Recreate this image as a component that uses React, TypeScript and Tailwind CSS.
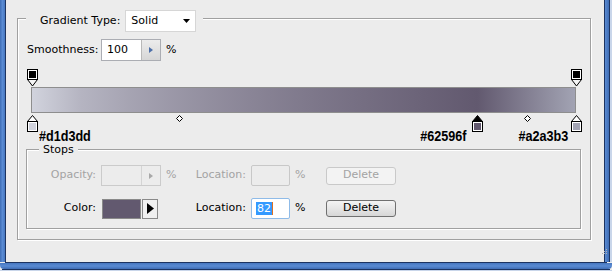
import React from "react";

function TopStop() {
  return (
    <svg width="11" height="18" viewBox="0 0 11 18">
      <path d="M0.5 10.5 L5.5 17 L10.5 10.5 Z" fill="#f4f4f4" stroke="#000" />
      <rect x="0.5" y="0.5" width="10" height="10" fill="#fff" stroke="#000" />
      <rect x="2" y="2" width="7" height="7" fill="#000" />
    </svg>
  );
}

function BottomStop({ color, selected }: { color: string; selected?: boolean }) {
  return (
    <svg width="11" height="17" viewBox="0 0 11 17">
      <path d="M0.5 6.5 L5.5 0.5 L10.5 6.5 Z" fill={selected ? "#000" : "#fff"} stroke="#000" />
      <rect x="0.5" y="6.5" width="10" height="10" fill="#fff" stroke="#000" />
      <rect x="2" y="8" width="7" height="7" fill={color} />
    </svg>
  );
}

function Diamond() {
  return (
    <svg width="7" height="7" viewBox="0 0 7 7">
      <path d="M3.5 0.5 L6.5 3.5 L3.5 6.5 L0.5 3.5 Z" fill="#fff" stroke="#000" />
    </svg>
  );
}

function Stepper({ disabled }: { disabled?: boolean }) {
  return (
    <div
      className={
        disabled
          ? "w-[19px] h-full border-l border-[#d4d4d4] bg-[#ececec] flex items-center justify-center"
          : "w-[19px] h-full border-l border-[#b9b9b9] bg-[linear-gradient(to_bottom,#ececec,#d6d6d6)] flex items-center justify-center"
      }
    >
      <svg width="4" height="6" viewBox="0 0 4 6">
        <path d="M0 0 L4 3 L0 6 Z" fill={disabled ? "#a8a8a8" : "#4d6fa8"} />
      </svg>
    </div>
  );
}

export default function App() {
  return (
    <div className="w-[612px] h-[271px] flex flex-col bg-[#ececec] overflow-hidden font-['DejaVu_Sans',sans-serif] text-[11px] text-black">
      <div className="flex h-[262px]">
        <div className="w-[5px] bg-[linear-gradient(to_right,#3f6db5,#5a8bd3,#4777c0)]" />
        <div className="w-px bg-[#1d3461]" />
        <div className="flex-1 pl-[11px] pt-[18px]">
          {/* outer group box */}
          <div className="relative w-[574px] h-[222px] border border-[#a0a0a0] shadow-[inset_1px_1px_0_#fff,1px_1px_0_#fff]">
            <div className="absolute left-[8px] top-[-9px] flex items-center h-[22px] bg-[#ececec] pl-[14px] pr-[7px]">
              <span className="mr-[5px]">Gradient Type:</span>
              <div className="w-[71px] h-[22px] bg-white border border-[#d6d6d6] flex items-center justify-between pl-[5px] pr-[5px]">
                <span>Solid</span>
                <svg width="7" height="4" viewBox="0 0 7 4">
                  <path d="M0 0 L7 0 L3.5 4 Z" fill="#000" />
                </svg>
              </div>
            </div>

            {/* smoothness */}
            <div className="pt-[20px] pl-[9px] flex items-center h-[42px]">
              <span className="w-[74px]">Smoothness:</span>
              <div className="w-[60px] h-[22px] bg-white border border-[#abadb3] flex items-center">
                <span className="flex-1 pl-[5px]">100</span>
                <Stepper />
              </div>
              <span className="ml-[5px]">%</span>
            </div>

            {/* gradient editor */}
            <div className="relative ml-[13px] mt-[8px] pt-[18px] w-[545px] h-[75px]">
              <div className="h-[26px] border border-[#8e8e8e] bg-[linear-gradient(to_right,#d1d3dd_0%,27%,#62596f_82%,#a2a3b3_100%)]" />
              <div className="absolute left-[-4px] top-0"><TopStop /></div>
              <div className="absolute left-[540px] top-0"><TopStop /></div>
              <div className="absolute left-[-4px] top-[46px]"><BottomStop color="#d1d3dd" /></div>
              <div className="absolute left-[441px] top-[46px]"><BottomStop color="#62596f" selected /></div>
              <div className="absolute left-[540px] top-[46px]"><BottomStop color="#a2a3b3" /></div>
              <div className="absolute left-[145px] top-[46px]"><Diamond /></div>
              <div className="absolute left-[493px] top-[46px]"><Diamond /></div>
              <span className="absolute left-[8px] top-[61px] inline-block origin-left scale-x-[0.9] font-['Liberation_Sans',sans-serif] font-bold text-[14px] leading-[12px]">#d1d3dd</span>
              <span className="absolute right-[110px] top-[61px] inline-block origin-right scale-x-[0.9] font-['Liberation_Sans',sans-serif] font-bold text-[14px] leading-[12px]">#62596f</span>
              <span className="absolute right-[8px] top-[61px] inline-block origin-right scale-x-[0.9] font-['Liberation_Sans',sans-serif] font-bold text-[14px] leading-[12px]">#a2a3b3</span>
            </div>

            {/* stops group */}
            <div className="relative ml-[8px] mt-[5px] w-[555px] h-[80px] border border-[#a0a0a0] shadow-[inset_1px_1px_0_#fff,1px_1px_0_#fff] pt-[15px]">
              <span className="absolute left-[12px] top-[-6px] bg-[#ececec] px-[4px] leading-[11px]">Stops</span>

              <div className="flex items-center h-[21px] text-[#a3a3a3]">
                <span className="w-[69px] text-right">Opacity:</span>
                <div className="ml-[5px] w-[60px] h-[21px] border border-[#cbcbcb] bg-[#ececec] flex">
                  <div className="flex-1" />
                  <Stepper disabled />
                </div>
                <div className="w-[85px] flex justify-between">
                  <span className="ml-[5px]">%</span>
                  <span>Location:</span>
                </div>
                <div className="ml-[5px] w-[39px] h-[21px] border border-[#c8c8c8] rounded-[2px] bg-[#ececec]" />
                <span className="w-[36px] pl-[5px]">%</span>
                <div className="w-[70px] h-[18px] border border-[#c9c9c9] rounded-[3px] bg-[#f3f3f3] flex items-center justify-center">
                  Delete
                </div>
              </div>

              <div className="mt-[12px] flex items-center h-[21px]">
                <span className="w-[69px] text-right">Color:</span>
                <div className="ml-[6px] w-[39px] h-[20px] border border-[#8a8a8a] bg-[#62596f]" />
                <div className="ml-[1px] w-[16px] h-[20px] border border-[#8a8a8a] bg-[#f0f0f0] flex items-center justify-center">
                  <svg width="7" height="11" viewBox="0 0 7 11">
                    <path d="M0 0 L7 5.5 L0 11 Z" fill="#000" />
                  </svg>
                </div>
                <span className="w-[88px] text-right">Location:</span>
                <div className="ml-[5px] w-[39px] h-[21px] border border-[#8fbbe8] rounded-[2px] bg-white flex items-center pl-[4px]">
                  <span className="bg-[#3399ff] text-white leading-[13px] px-px">82</span>
                  <span className="w-px h-[13px] bg-[#e07020]" />
                </div>
                <span className="w-[36px] pl-[5px]">%</span>
                <div className="w-[70px] h-[17px] border border-[#707070] rounded-[3px] bg-[linear-gradient(to_bottom,#f4f4f4,#e6e6e6_50%,#d6d6d6)] flex items-center justify-center">
                  Delete
                </div>
              </div>
            </div>
          </div>
          <div className="relative h-0">
            <svg className="absolute left-[583px] top-[9px]" width="8" height="8" viewBox="0 0 8 8">
              <rect x="6" y="0" width="1" height="1" fill="#b0b0b0" />
              <rect x="4" y="2" width="1" height="1" fill="#b0b0b0" />
              <rect x="6" y="2" width="1" height="1" fill="#b0b0b0" />
              <rect x="2" y="4" width="1" height="1" fill="#b0b0b0" />
              <rect x="4" y="4" width="1" height="1" fill="#b0b0b0" />
              <rect x="6" y="4" width="1" height="1" fill="#b0b0b0" />
            </svg>
          </div>
        </div>
        <div className="w-px bg-[#1d3461]" />
        <div className="w-[4px] bg-[linear-gradient(to_right,#5a8bd3,#3f6db5)]" />
        <div className="w-px bg-[#1d3461]" />
        <div className="w-[2px] bg-[#c9d6ea]" />
      </div>
      <div className="h-px bg-[#1d3461] mx-[5px]" />
      <div className="h-[6px] bg-[linear-gradient(to_bottom,#4777c0,#5a8bd3,#3f6db5)] rounded-b-[4px]" />
      <div className="h-px bg-[#1d3461] mx-[2px]" />
      <div className="h-px bg-[#c9d6ea]" />
    </div>
  );
}
